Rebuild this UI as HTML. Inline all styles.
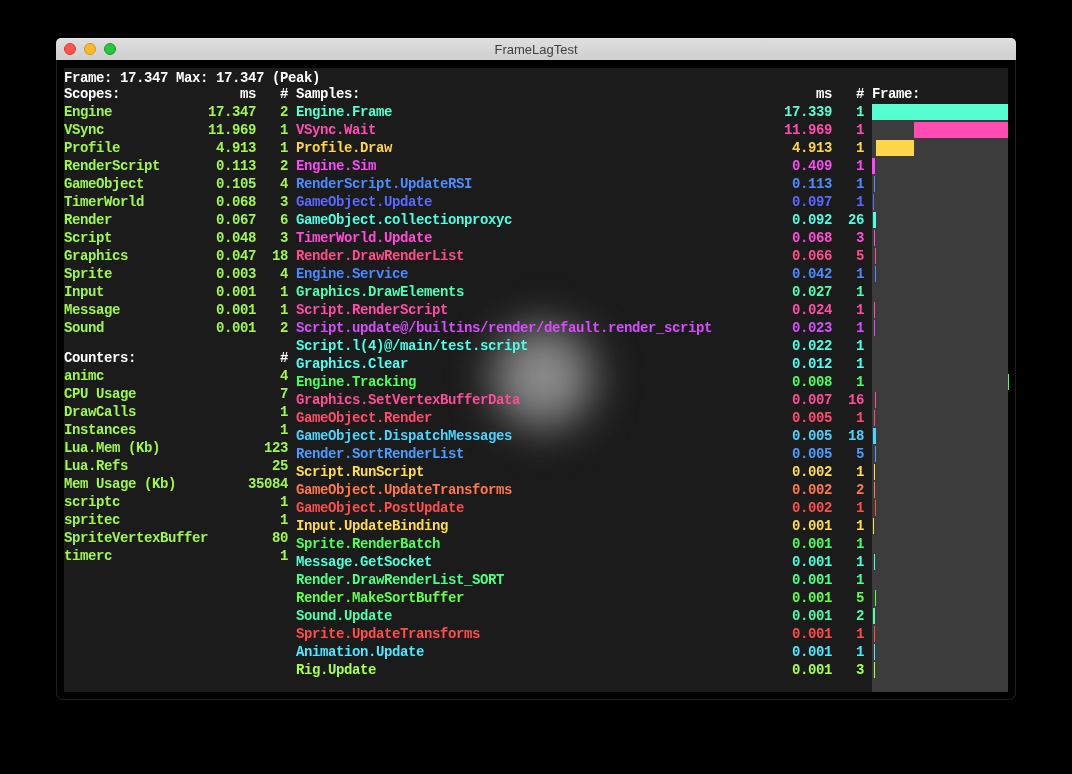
<!DOCTYPE html>
<html><head><meta charset="utf-8"><style>
html,body{margin:0;padding:0;}
body{width:1072px;height:774px;background:#000;position:relative;overflow:hidden;}
#win{position:absolute;left:56px;top:60px;width:958px;height:639px;border:1px solid #1f1f1f;border-top:none;border-radius:0 0 7px 7px;background:#000;}
#title{position:absolute;left:56px;top:38px;width:960px;height:22px;border-radius:5px 5px 0 0;background:linear-gradient(#ededed 0,#dedede 1px,#cfcfcf 100%);}
#title .tt{position:absolute;left:0;right:0;top:4px;text-align:center;font:13px "Liberation Sans",sans-serif;color:#404040;line-height:16px;will-change:transform;}
.dot{position:absolute;top:5px;width:12px;height:12px;border-radius:50%;box-sizing:border-box;}
#panel{position:absolute;left:64px;top:68px;width:944px;height:624px;background:#1b1b1b;}
#chart{position:absolute;left:872px;top:104px;width:136px;height:588px;background:#3c3c3c;}
#glow{position:absolute;left:493px;top:327px;width:100px;height:100px;border-radius:50%;background:#8b8b8b;filter:blur(22px);}
.t{position:absolute;white-space:pre;font-family:"Liberation Mono",monospace;font-weight:bold;font-size:14px;letter-spacing:-0.4px;line-height:18px;}
.b{position:absolute;height:16px;}
#txt{position:absolute;left:0;top:0;width:1072px;height:774px;will-change:transform;}
</style></head><body>
<div id="win"></div>
<div id="title">
<div class="dot" style="left:8px;background:#fd544d;border:1px solid #d93c36"></div>
<div class="dot" style="left:28px;background:#fdb82a;border:1px solid #d9961a"></div>
<div class="dot" style="left:48px;background:#28c63e;border:1px solid #149f22"></div>
<div class="tt">FrameLagTest</div>
</div>
<div id="panel"></div>
<div id="chart"></div>
<div id="glow"></div>
<div class="b" style="left:872px;top:104px;width:136px;background:#55ffd0"></div>
<div class="b" style="left:914px;top:122px;width:94px;background:#ff4cb2"></div>
<div class="b" style="left:876px;top:140px;width:38px;background:#ffd54c"></div>
<div class="b" style="left:872px;top:158px;width:3px;background:#f84cf2"></div>
<div class="b" style="left:874px;top:176px;width:1px;background:#4c8cff"></div>
<div class="b" style="left:873px;top:194px;width:1px;background:#5a68ff"></div>
<div class="b" style="left:873px;top:212px;width:3px;background:#4cffe4"></div>
<div class="b" style="left:874px;top:230px;width:1px;background:#ff4cd8"></div>
<div class="b" style="left:875px;top:248px;width:1px;background:#ff4c8a"></div>
<div class="b" style="left:875px;top:266px;width:1px;background:#4c88ff"></div>
<div class="b" style="left:874px;top:302px;width:1px;background:#ff4ca8"></div>
<div class="b" style="left:874px;top:320px;width:1px;background:#d84cff"></div>
<div class="b" style="left:1008px;top:374px;width:1px;background:#4cff5c"></div>
<div class="b" style="left:875px;top:392px;width:1px;background:#ff4c98"></div>
<div class="b" style="left:874px;top:410px;width:1px;background:#ff4c6e"></div>
<div class="b" style="left:873px;top:428px;width:3px;background:#4cd4ff"></div>
<div class="b" style="left:875px;top:446px;width:1px;background:#4c9cff"></div>
<div class="b" style="left:874px;top:464px;width:1px;background:#ffdc4c"></div>
<div class="b" style="left:874px;top:482px;width:1px;background:#ff784c"></div>
<div class="b" style="left:875px;top:500px;width:1px;background:#ff4c4c"></div>
<div class="b" style="left:873px;top:518px;width:1px;background:#ffdc4c"></div>
<div class="b" style="left:874px;top:554px;width:1px;background:#4cffd8"></div>
<div class="b" style="left:875px;top:590px;width:1px;background:#64ff4c"></div>
<div class="b" style="left:873px;top:608px;width:2px;background:#4cffaa"></div>
<div class="b" style="left:874px;top:626px;width:1px;background:#ff4c4c"></div>
<div class="b" style="left:874px;top:644px;width:1px;background:#4ce8ff"></div>
<div class="b" style="left:874px;top:662px;width:1px;background:#a8ff4c"></div>
<div id="txt">
<div class="t" style="left:64px;top:69px;color:#ffffff">Frame: 17.347 Max: 17.347 (Peak)</div>
<div class="t" style="left:64px;top:85px;color:#ffffff">Scopes:</div>
<div class="t" style="left:240px;top:85px;color:#ffffff">ms</div>
<div class="t" style="left:280px;top:85px;color:#ffffff">#</div>
<div class="t" style="left:296px;top:85px;color:#ffffff">Samples:</div>
<div class="t" style="left:816px;top:85px;color:#ffffff">ms</div>
<div class="t" style="left:856px;top:85px;color:#ffffff">#</div>
<div class="t" style="left:872px;top:85px;color:#ffffff">Frame:</div>
<div class="t" style="left:64px;top:103px;color:#a0f550">Engine</div>
<div class="t" style="left:208px;top:103px;color:#a0f550">17.347</div>
<div class="t" style="left:280px;top:103px;color:#a0f550">2</div>
<div class="t" style="left:64px;top:121px;color:#a0f550">VSync</div>
<div class="t" style="left:208px;top:121px;color:#a0f550">11.969</div>
<div class="t" style="left:280px;top:121px;color:#a0f550">1</div>
<div class="t" style="left:64px;top:139px;color:#a0f550">Profile</div>
<div class="t" style="left:216px;top:139px;color:#a0f550">4.913</div>
<div class="t" style="left:280px;top:139px;color:#a0f550">1</div>
<div class="t" style="left:64px;top:157px;color:#a0f550">RenderScript</div>
<div class="t" style="left:216px;top:157px;color:#a0f550">0.113</div>
<div class="t" style="left:280px;top:157px;color:#a0f550">2</div>
<div class="t" style="left:64px;top:175px;color:#a0f550">GameObject</div>
<div class="t" style="left:216px;top:175px;color:#a0f550">0.105</div>
<div class="t" style="left:280px;top:175px;color:#a0f550">4</div>
<div class="t" style="left:64px;top:193px;color:#a0f550">TimerWorld</div>
<div class="t" style="left:216px;top:193px;color:#a0f550">0.068</div>
<div class="t" style="left:280px;top:193px;color:#a0f550">3</div>
<div class="t" style="left:64px;top:211px;color:#a0f550">Render</div>
<div class="t" style="left:216px;top:211px;color:#a0f550">0.067</div>
<div class="t" style="left:280px;top:211px;color:#a0f550">6</div>
<div class="t" style="left:64px;top:229px;color:#a0f550">Script</div>
<div class="t" style="left:216px;top:229px;color:#a0f550">0.048</div>
<div class="t" style="left:280px;top:229px;color:#a0f550">3</div>
<div class="t" style="left:64px;top:247px;color:#a0f550">Graphics</div>
<div class="t" style="left:216px;top:247px;color:#a0f550">0.047</div>
<div class="t" style="left:272px;top:247px;color:#a0f550">18</div>
<div class="t" style="left:64px;top:265px;color:#a0f550">Sprite</div>
<div class="t" style="left:216px;top:265px;color:#a0f550">0.003</div>
<div class="t" style="left:280px;top:265px;color:#a0f550">4</div>
<div class="t" style="left:64px;top:283px;color:#a0f550">Input</div>
<div class="t" style="left:216px;top:283px;color:#a0f550">0.001</div>
<div class="t" style="left:280px;top:283px;color:#a0f550">1</div>
<div class="t" style="left:64px;top:301px;color:#a0f550">Message</div>
<div class="t" style="left:216px;top:301px;color:#a0f550">0.001</div>
<div class="t" style="left:280px;top:301px;color:#a0f550">1</div>
<div class="t" style="left:64px;top:319px;color:#a0f550">Sound</div>
<div class="t" style="left:216px;top:319px;color:#a0f550">0.001</div>
<div class="t" style="left:280px;top:319px;color:#a0f550">2</div>
<div class="t" style="left:64px;top:349px;color:#ffffff">Counters:</div>
<div class="t" style="left:280px;top:349px;color:#ffffff">#</div>
<div class="t" style="left:64px;top:367px;color:#a0f550">animc</div>
<div class="t" style="left:280px;top:367px;color:#a0f550">4</div>
<div class="t" style="left:64px;top:385px;color:#a0f550">CPU Usage</div>
<div class="t" style="left:280px;top:385px;color:#a0f550">7</div>
<div class="t" style="left:64px;top:403px;color:#a0f550">DrawCalls</div>
<div class="t" style="left:280px;top:403px;color:#a0f550">1</div>
<div class="t" style="left:64px;top:421px;color:#a0f550">Instances</div>
<div class="t" style="left:280px;top:421px;color:#a0f550">1</div>
<div class="t" style="left:64px;top:439px;color:#a0f550">Lua.Mem (Kb)</div>
<div class="t" style="left:264px;top:439px;color:#a0f550">123</div>
<div class="t" style="left:64px;top:457px;color:#a0f550">Lua.Refs</div>
<div class="t" style="left:272px;top:457px;color:#a0f550">25</div>
<div class="t" style="left:64px;top:475px;color:#a0f550">Mem Usage (Kb)</div>
<div class="t" style="left:248px;top:475px;color:#a0f550">35084</div>
<div class="t" style="left:64px;top:493px;color:#a0f550">scriptc</div>
<div class="t" style="left:280px;top:493px;color:#a0f550">1</div>
<div class="t" style="left:64px;top:511px;color:#a0f550">spritec</div>
<div class="t" style="left:280px;top:511px;color:#a0f550">1</div>
<div class="t" style="left:64px;top:529px;color:#a0f550">SpriteVertexBuffer</div>
<div class="t" style="left:272px;top:529px;color:#a0f550">80</div>
<div class="t" style="left:64px;top:547px;color:#a0f550">timerc</div>
<div class="t" style="left:280px;top:547px;color:#a0f550">1</div>
<div class="t" style="left:296px;top:103px;color:#55ffd0">Engine.Frame</div>
<div class="t" style="left:784px;top:103px;color:#55ffd0">17.339</div>
<div class="t" style="left:856px;top:103px;color:#55ffd0">1</div>
<div class="t" style="left:296px;top:121px;color:#ff4cb2">VSync.Wait</div>
<div class="t" style="left:784px;top:121px;color:#ff4cb2">11.969</div>
<div class="t" style="left:856px;top:121px;color:#ff4cb2">1</div>
<div class="t" style="left:296px;top:139px;color:#ffd54c">Profile.Draw</div>
<div class="t" style="left:792px;top:139px;color:#ffd54c">4.913</div>
<div class="t" style="left:856px;top:139px;color:#ffd54c">1</div>
<div class="t" style="left:296px;top:157px;color:#f84cf2">Engine.Sim</div>
<div class="t" style="left:792px;top:157px;color:#f84cf2">0.409</div>
<div class="t" style="left:856px;top:157px;color:#f84cf2">1</div>
<div class="t" style="left:296px;top:175px;color:#4c8cff">RenderScript.UpdateRSI</div>
<div class="t" style="left:792px;top:175px;color:#4c8cff">0.113</div>
<div class="t" style="left:856px;top:175px;color:#4c8cff">1</div>
<div class="t" style="left:296px;top:193px;color:#5a68ff">GameObject.Update</div>
<div class="t" style="left:792px;top:193px;color:#5a68ff">0.097</div>
<div class="t" style="left:856px;top:193px;color:#5a68ff">1</div>
<div class="t" style="left:296px;top:211px;color:#4cffe4">GameObject.collectionproxyc</div>
<div class="t" style="left:792px;top:211px;color:#4cffe4">0.092</div>
<div class="t" style="left:848px;top:211px;color:#4cffe4">26</div>
<div class="t" style="left:296px;top:229px;color:#ff4cd8">TimerWorld.Update</div>
<div class="t" style="left:792px;top:229px;color:#ff4cd8">0.068</div>
<div class="t" style="left:856px;top:229px;color:#ff4cd8">3</div>
<div class="t" style="left:296px;top:247px;color:#ff4c8a">Render.DrawRenderList</div>
<div class="t" style="left:792px;top:247px;color:#ff4c8a">0.066</div>
<div class="t" style="left:856px;top:247px;color:#ff4c8a">5</div>
<div class="t" style="left:296px;top:265px;color:#4c88ff">Engine.Service</div>
<div class="t" style="left:792px;top:265px;color:#4c88ff">0.042</div>
<div class="t" style="left:856px;top:265px;color:#4c88ff">1</div>
<div class="t" style="left:296px;top:283px;color:#4cffb4">Graphics.DrawElements</div>
<div class="t" style="left:792px;top:283px;color:#4cffb4">0.027</div>
<div class="t" style="left:856px;top:283px;color:#4cffb4">1</div>
<div class="t" style="left:296px;top:301px;color:#ff4ca8">Script.RenderScript</div>
<div class="t" style="left:792px;top:301px;color:#ff4ca8">0.024</div>
<div class="t" style="left:856px;top:301px;color:#ff4ca8">1</div>
<div class="t" style="left:296px;top:319px;color:#d84cff">Script.update@/builtins/render/default.render_script</div>
<div class="t" style="left:792px;top:319px;color:#d84cff">0.023</div>
<div class="t" style="left:856px;top:319px;color:#d84cff">1</div>
<div class="t" style="left:296px;top:337px;color:#4cffe8">Script.l(4)@/main/test.script</div>
<div class="t" style="left:792px;top:337px;color:#4cffe8">0.022</div>
<div class="t" style="left:856px;top:337px;color:#4cffe8">1</div>
<div class="t" style="left:296px;top:355px;color:#4cfff0">Graphics.Clear</div>
<div class="t" style="left:792px;top:355px;color:#4cfff0">0.012</div>
<div class="t" style="left:856px;top:355px;color:#4cfff0">1</div>
<div class="t" style="left:296px;top:373px;color:#4cff5c">Engine.Tracking</div>
<div class="t" style="left:792px;top:373px;color:#4cff5c">0.008</div>
<div class="t" style="left:856px;top:373px;color:#4cff5c">1</div>
<div class="t" style="left:296px;top:391px;color:#ff4c98">Graphics.SetVertexBufferData</div>
<div class="t" style="left:792px;top:391px;color:#ff4c98">0.007</div>
<div class="t" style="left:848px;top:391px;color:#ff4c98">16</div>
<div class="t" style="left:296px;top:409px;color:#ff4c6e">GameObject.Render</div>
<div class="t" style="left:792px;top:409px;color:#ff4c6e">0.005</div>
<div class="t" style="left:856px;top:409px;color:#ff4c6e">1</div>
<div class="t" style="left:296px;top:427px;color:#4cd4ff">GameObject.DispatchMessages</div>
<div class="t" style="left:792px;top:427px;color:#4cd4ff">0.005</div>
<div class="t" style="left:848px;top:427px;color:#4cd4ff">18</div>
<div class="t" style="left:296px;top:445px;color:#4c9cff">Render.SortRenderList</div>
<div class="t" style="left:792px;top:445px;color:#4c9cff">0.005</div>
<div class="t" style="left:856px;top:445px;color:#4c9cff">5</div>
<div class="t" style="left:296px;top:463px;color:#ffdc4c">Script.RunScript</div>
<div class="t" style="left:792px;top:463px;color:#ffdc4c">0.002</div>
<div class="t" style="left:856px;top:463px;color:#ffdc4c">1</div>
<div class="t" style="left:296px;top:481px;color:#ff784c">GameObject.UpdateTransforms</div>
<div class="t" style="left:792px;top:481px;color:#ff784c">0.002</div>
<div class="t" style="left:856px;top:481px;color:#ff784c">2</div>
<div class="t" style="left:296px;top:499px;color:#ff4c4c">GameObject.PostUpdate</div>
<div class="t" style="left:792px;top:499px;color:#ff4c4c">0.002</div>
<div class="t" style="left:856px;top:499px;color:#ff4c4c">1</div>
<div class="t" style="left:296px;top:517px;color:#ffdc4c">Input.UpdateBinding</div>
<div class="t" style="left:792px;top:517px;color:#ffdc4c">0.001</div>
<div class="t" style="left:856px;top:517px;color:#ffdc4c">1</div>
<div class="t" style="left:296px;top:535px;color:#4cff5c">Sprite.RenderBatch</div>
<div class="t" style="left:792px;top:535px;color:#4cff5c">0.001</div>
<div class="t" style="left:856px;top:535px;color:#4cff5c">1</div>
<div class="t" style="left:296px;top:553px;color:#4cffd8">Message.GetSocket</div>
<div class="t" style="left:792px;top:553px;color:#4cffd8">0.001</div>
<div class="t" style="left:856px;top:553px;color:#4cffd8">1</div>
<div class="t" style="left:296px;top:571px;color:#4cff88">Render.DrawRenderList_SORT</div>
<div class="t" style="left:792px;top:571px;color:#4cff88">0.001</div>
<div class="t" style="left:856px;top:571px;color:#4cff88">1</div>
<div class="t" style="left:296px;top:589px;color:#64ff4c">Render.MakeSortBuffer</div>
<div class="t" style="left:792px;top:589px;color:#64ff4c">0.001</div>
<div class="t" style="left:856px;top:589px;color:#64ff4c">5</div>
<div class="t" style="left:296px;top:607px;color:#4cffaa">Sound.Update</div>
<div class="t" style="left:792px;top:607px;color:#4cffaa">0.001</div>
<div class="t" style="left:856px;top:607px;color:#4cffaa">2</div>
<div class="t" style="left:296px;top:625px;color:#ff4c4c">Sprite.UpdateTransforms</div>
<div class="t" style="left:792px;top:625px;color:#ff4c4c">0.001</div>
<div class="t" style="left:856px;top:625px;color:#ff4c4c">1</div>
<div class="t" style="left:296px;top:643px;color:#4ce8ff">Animation.Update</div>
<div class="t" style="left:792px;top:643px;color:#4ce8ff">0.001</div>
<div class="t" style="left:856px;top:643px;color:#4ce8ff">1</div>
<div class="t" style="left:296px;top:661px;color:#a8ff4c">Rig.Update</div>
<div class="t" style="left:792px;top:661px;color:#a8ff4c">0.001</div>
<div class="t" style="left:856px;top:661px;color:#a8ff4c">3</div>
</div>
</body></html>
